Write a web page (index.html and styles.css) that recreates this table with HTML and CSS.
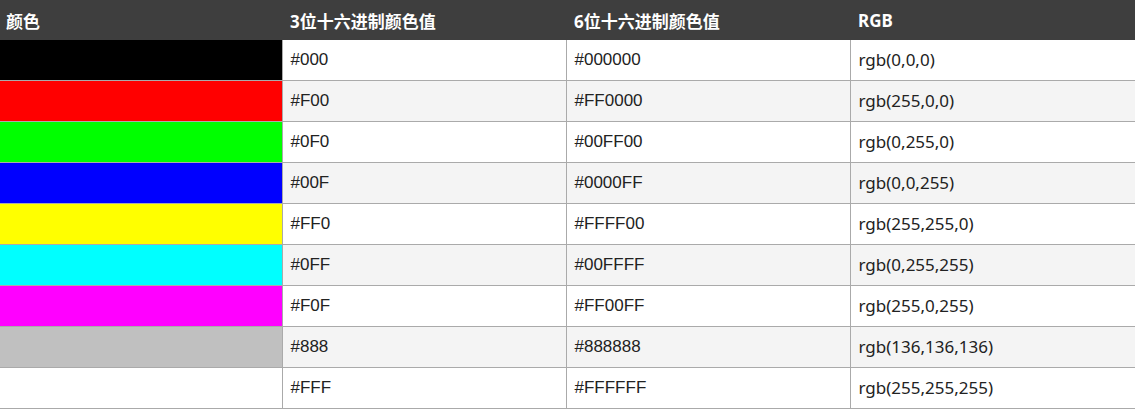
FILE: index.html
```html
<!DOCTYPE html>
<html lang="zh">
<head>
<meta charset="utf-8">
<title>颜色</title>
<link rel="stylesheet" href="styles.css">
</head>
<body>
<table class="colors">
  <colgroup><col class="c1"><col class="c2"><col class="c3"><col class="c4"></colgroup>
  <thead>
    <tr><th>颜色</th><th>3位十六进制颜色值</th><th>6位十六进制颜色值</th><th>RGB</th></tr>
  </thead>
  <tbody>
    <tr><td class="sw c-000"></td><td class="hex">#000</td><td class="hex">#000000</td><td class="rgb">rgb(0,0,0)</td></tr>
    <tr><td class="sw c-f00"></td><td class="hex">#F00</td><td class="hex">#FF0000</td><td class="rgb">rgb(255,0,0)</td></tr>
    <tr><td class="sw c-0f0"></td><td class="hex">#0F0</td><td class="hex">#00FF00</td><td class="rgb">rgb(0,255,0)</td></tr>
    <tr><td class="sw c-00f"></td><td class="hex">#00F</td><td class="hex">#0000FF</td><td class="rgb">rgb(0,0,255)</td></tr>
    <tr><td class="sw c-ff0"></td><td class="hex">#FF0</td><td class="hex">#FFFF00</td><td class="rgb">rgb(255,255,0)</td></tr>
    <tr><td class="sw c-0ff"></td><td class="hex">#0FF</td><td class="hex">#00FFFF</td><td class="rgb">rgb(0,255,255)</td></tr>
    <tr><td class="sw c-f0f"></td><td class="hex">#F0F</td><td class="hex">#FF00FF</td><td class="rgb">rgb(255,0,255)</td></tr>
    <tr><td class="sw c-888"></td><td class="hex">#888</td><td class="hex">#888888</td><td class="rgb">rgb(136,136,136)</td></tr>
    <tr><td class="sw c-fff"></td><td class="hex">#FFF</td><td class="hex">#FFFFFF</td><td class="rgb">rgb(255,255,255)</td></tr>
  </tbody>
</table>
</body>
</html>
```
FILE: styles.css
```css
html, body { margin: 0; padding: 0; background: #fff; }
body { font-family: "Liberation Sans", "Noto Sans CJK SC", sans-serif; color: #222; }
.colors {
  width: 1135px;
  border-collapse: collapse;
  table-layout: fixed;
}
.colors col.c1 { width: 282px; }
.colors col.c2 { width: 284px; }
.colors col.c3 { width: 284px; }
.colors col.c4 { width: 285px; }
.colors th {
  background: #3e3e3e;
  color: #fff;
  font-family: "Noto Sans", "Noto Sans CJK SC", sans-serif;
  font-weight: bold;
  font-size: 17px;
  text-align: left;
  height: 40px;
  padding: 0 0 0 8px;
  box-sizing: border-box;
}
.colors th:first-child { padding-left: 6px; }
.colors td {
  height: 41px;
  border: 1px solid #aaa;
  padding: 0 0 0 8px;
  font-size: 17px;
  box-sizing: border-box;
}
.colors tbody tr:first-child td { border-top: none; height: 40px; }
.colors td:first-child { border-left: none; }
.colors tbody tr:nth-child(even) td { background: #f4f4f4; }
.colors td.rgb { font-family: "Noto Sans", "DejaVu Sans", sans-serif; font-size: 17px; }
.colors tbody tr td.sw.c-000 { background: #000; }
.colors tbody tr td.sw.c-f00 { background: #f00; }
.colors tbody tr td.sw.c-0f0 { background: #0f0; }
.colors tbody tr td.sw.c-00f { background: #00f; }
.colors tbody tr td.sw.c-ff0 { background: #ff0; }
.colors tbody tr td.sw.c-0ff { background: #0ff; }
.colors tbody tr td.sw.c-f0f { background: #f0f; }
.colors tbody tr td.sw.c-888 { background: #c0c0c0; }
.colors tbody tr td.sw.c-fff { background: #fff; }
```
